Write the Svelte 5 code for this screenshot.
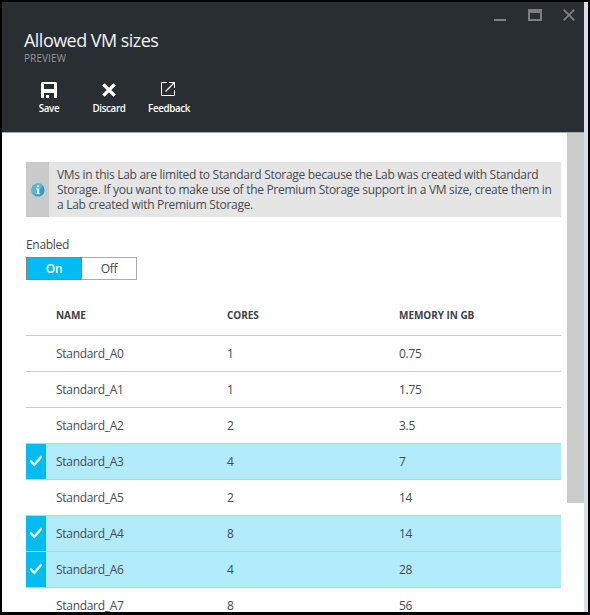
<script>
  const rows = [
    { name: 'Standard_A0', cores: '1', memory: '0.75', selected: false },
    { name: 'Standard_A1', cores: '1', memory: '1.75', selected: false },
    { name: 'Standard_A2', cores: '2', memory: '3.5', selected: false },
    { name: 'Standard_A3', cores: '4', memory: '7', selected: true },
    { name: 'Standard_A5', cores: '2', memory: '14', selected: false },
    { name: 'Standard_A4', cores: '8', memory: '14', selected: true },
    { name: 'Standard_A6', cores: '4', memory: '28', selected: true },
    { name: 'Standard_A7', cores: '8', memory: '56', selected: false }
  ];
  const notice = [
    'VMs in this Lab are limited to Standard Storage because the Lab was created with Standard',
    'Storage. If you want to make use of the Premium Storage support in a VM size, create them in',
    'a Lab created with Premium Storage.'
  ];
</script>

<div class="frame">
  <div class="blade">
    <header>
      <div class="window-buttons">
        <svg width="12" height="12" viewBox="0 0 12 12"><path d="M0 10h12v2H0z" fill="#7c8083" /></svg>
        <svg width="14" height="12" viewBox="0 0 14 12"><path fill-rule="evenodd" d="M0 0h14v12H0zM2 4v6h10V4z" fill="#7c8083" /></svg>
        <svg width="12" height="12" viewBox="0 0 12 12"><path d="M.7.7l10.6 10.6M11.3.7L.7 11.3" stroke="#7c8083" stroke-width="1.9" /></svg>
      </div>
      <h1>Allowed VM sizes</h1>
      <div class="preview">PREVIEW</div>
      <nav>
        <button>
          <svg width="16" height="16" viewBox="0 0 16 16"><path fill="#fff" fill-rule="evenodd" d="M1 0h14l1 1v15h-3v-5H3v5H0V1zM3 2v5h10V2z" /><path fill="#fff" d="M5 13h3v3H5z" /></svg>
          <span>Save</span>
        </button>
        <button>
          <svg width="16" height="16" viewBox="0 0 16 16"><path d="M2.4 2.4l11.2 11.2M13.6 2.4L2.4 13.6" stroke="#fff" stroke-width="3.4" /></svg>
          <span>Discard</span>
        </button>
        <button>
          <svg class="feedback" width="16" height="16" viewBox="0 0 16 16"><path d="M7 1.5H1.5v13h13V9M9 1.5h5.5V7" fill="none" stroke="#fff" /><path d="M14.5 1.5L5.5 10.5" stroke="#fff" stroke-width="1.3" /></svg>
          <span>Feedback</span>
        </button>
      </nav>
    </header>
    <div class="body">
      <main>
        <div class="notice">
          <div class="notice-icon">
            <svg width="14" height="14" viewBox="0 0 14 14"><circle cx="7" cy="7" r="6.6" fill="#3999c9" /><path d="M.4 7a6.6 6.6 0 0 1 11.6-4.3L3.5 12.6A6.6 6.6 0 0 1 .4 7z" fill="#59b4d9" /><path d="M6 2.4h2.2v1.8H6zM5.4 5.4h2.8v4.9h.7v1H5.4v-1H6V6.4h-.6z" fill="#fff" /></svg>
          </div>
          <p>{#each notice as line}<span class="line">{line}</span>{/each}</p>
        </div>
        <div class="label">Enabled</div>
        <div class="toggle"><button class="on">On</button><button class="off">Off</button></div>
        <div class="grid">
          <div class="row head"><span></span><span>NAME</span><span>CORES</span><span>MEMORY IN GB</span></div>
          {#each rows as row}
            <div class="row" class:selected={row.selected}>
              <span class="tick">
                {#if row.selected}
                  <svg width="14" height="12" viewBox="0 0 14 12"><path d="M1.2 5.6l4.2 4.2L12.6 1.2" fill="none" stroke="#fff" stroke-width="2.3" /></svg>
                {/if}
              </span>
              <span class="name">{row.name}</span><span>{row.cores}</span><span>{row.memory}</span>
            </div>
          {/each}
        </div>
      </main>
      <div class="scroll"><div class="thumb"></div></div>
    </div>
  </div>
  <div class="edge"></div>
</div>

<style>
  .frame {
    box-sizing: border-box;
    width: 590px;
    height: 615px;
    display: flex;
    border: solid #000;
    border-width: 2px 2px 3px 2px;
    overflow: hidden;
    background: #fff;
    color: #454b53;
    font: 12px/15px 'Open Sans', 'Noto Sans', sans-serif;
    letter-spacing: -0.3px;
  }
  .blade { width: 582px; display: flex; flex-direction: column; }
  .edge { width: 4px; background: #dadce8; }
  header {
    box-sizing: border-box;
    height: 131px;
    flex: none;
    background: #292e32;
    border-bottom: 1px solid #aaa8ac;
    color: #fff;
    padding: 7px 9px 0 22px;
  }
  .window-buttons { display: flex; justify-content: flex-end; height: 12px; }
  .window-buttons svg:nth-child(2) { margin: 0 21px 0 22px; }
  h1 { margin: 7px 0 0; font-size: 18px; line-height: 24px; font-weight: 400; color: #f2f2f2; white-space: nowrap; letter-spacing: -0.53px; }
  .preview { font-size: 10px; line-height: 12px; margin-top: 0; color: #94979a; letter-spacing: 0.1px; }
  button { font: inherit; letter-spacing: inherit; color: inherit; background: none; border: 0; padding: 0; }
  nav { display: flex; margin: 18px 0 0 -5px; }
  nav button { width: 60px; display: flex; flex-direction: column; align-items: center; font-size: 9.8px; line-height: 12px; font-weight: 600; letter-spacing: -0.38px; }
  nav svg { margin-bottom: 5px; }
  nav .feedback { position: relative; left: -1px; top: -1px; }
  .body { display: flex; flex: 1; min-height: 0; }
  main { width: 535px; padding: 29px 6px 0 24px; overflow: hidden; }
  .notice { display: flex; height: 55px; background: #e5e5e5; }
  .notice-icon { width: 23px; flex: none; background: #cacaca; display: flex; align-items: center; justify-content: center; }
  .notice p { margin: 0; padding: 5px 0 0 8px; white-space: nowrap; }
  .line { display: block; }
  .label { margin-top: 20px; line-height: 16px; }
  .toggle { display: flex; margin-top: 4px; }
  .toggle button { box-sizing: border-box; height: 23px; border: 1px solid #ababab; }
  .toggle .on { width: 56px; background: #00bcf2; color: #fff; border-color: #808285; font-weight: 600; }
  .toggle .off { width: 55px; border-left: 0; }
  .grid { margin-top: 16px; }
  .row { box-sizing: border-box; height: 36px; display: grid; grid-template-columns: 20px 181px 172px 1fr; border-bottom: 1px solid #cbcbcb; line-height: 35px; }
  .row > span:nth-child(2) { padding-left: 10px; }
  .head { height: 40px; font-size: 10px; font-weight: 700; line-height: 39px; letter-spacing: -0.05px; color: #3b424a; }
  .selected { background: #b2ebfb; }
  .tick { display: flex; align-items: center; justify-content: center; }
  .tick svg { position: relative; top: -1px; }
  .selected .tick { background: #00bcf2; }
  .scroll { width: 17px; }
  .thumb { height: 370px; background: #cbcbcb; }
</style>
